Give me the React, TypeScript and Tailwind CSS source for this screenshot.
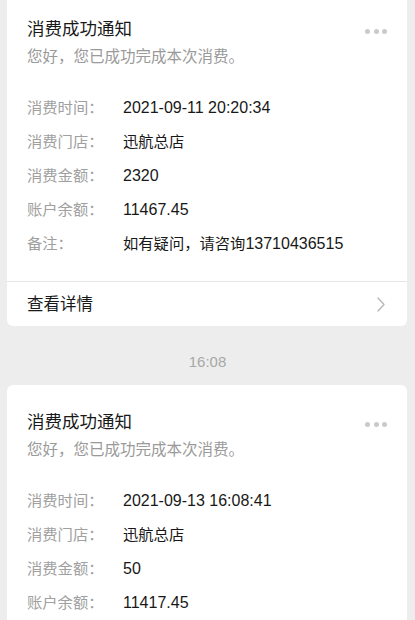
import React from "react";

const FONT = { fontFamily: '"Liberation Sans", "Noto Sans CJK SC", sans-serif' };

type Row = [string, string];

function Mixed({ text }: { text: string }) {
  const parts = text.split(/([\x20-\x7E]+)/).filter((p) => p.length > 0);
  return (
    <>
      {parts.map((p, i) =>
        /^[\x20-\x7E]+$/.test(p) ? (
          <span key={i} className="text-[16px]">
            {p}
          </span>
        ) : (
          <span key={i} className="text-[15.3px]">
            {p}
          </span>
        )
      )}
    </>
  );
}

function Dots() {
  return (
    <div className="flex items-center gap-[3.5px] mt-[4px]">
      <span className="w-[5px] h-[5px] rounded-full bg-[#cacaca]" />
      <span className="w-[5px] h-[5px] rounded-full bg-[#cacaca]" />
      <span className="w-[5px] h-[5px] rounded-full bg-[#cacaca]" />
    </div>
  );
}

function Card({ rows, footer }: { rows: Row[]; footer: boolean }) {
  return (
    <div className="ml-[7px] mr-[8px] bg-white rounded-[6px]">
      <div className="px-5 pt-6 pb-[20px]">
        <div className="flex items-center justify-between">
          <div className="text-[17.5px] leading-[26px] text-[#191919]">消费成功通知</div>
          <Dots />
        </div>
        <div className="mt-[4px] text-[15.5px] leading-[22px] text-[#9a9a9a]">
          您好，您已成功完成本次消费。
        </div>
        <div className="mt-[23px] flex flex-col">
          {rows.map(([k, v]) => (
            <div key={k} className="flex items-center h-[34px]">
              <div className="w-[96px] shrink-0 text-[15.3px] text-[#a0a0a0]">{k}</div>
              <div className="text-[#181818] whitespace-nowrap">
                <Mixed text={v} />
              </div>
            </div>
          ))}
        </div>
      </div>
      {footer && (
        <div className="border-t border-[#e6e6e6] h-[45px] flex items-center justify-between pl-5 pr-[22px]">
          <span className="text-[16.5px] text-[#191919]">查看详情</span>
          <svg width="8" height="15" viewBox="0 0 8 15" fill="none">
            <path d="M1 1 L7 7.5 L1 14" stroke="#b8b8b8" strokeWidth="1.4" strokeLinecap="round" strokeLinejoin="round" />
          </svg>
        </div>
      )}
    </div>
  );
}

export default function App() {
  return (
    <div className="w-[415px] h-[620px] overflow-hidden bg-[#ededed]" style={FONT}>
      <div className="-mt-[8px]">
        <Card
          footer
          rows={[
            ["消费时间：", "2021-09-11 20:20:34"],
            ["消费门店：", "迅航总店"],
            ["消费金额：", "2320"],
            ["账户余额：", "11467.45"],
            ["备注：", "如有疑问，请咨询13710436515"],
          ]}
        />
        <div className="pt-[25px] pb-[12px] text-center text-[15px] leading-[22px] text-[#a8a8a8]">16:08</div>
        <Card
          footer
          rows={[
            ["消费时间：", "2021-09-13 16:08:41"],
            ["消费门店：", "迅航总店"],
            ["消费金额：", "50"],
            ["账户余额：", "11417.45"],
            ["备注：", "如有疑问，请咨询13710436515"],
          ]}
        />
      </div>
    </div>
  );
}
